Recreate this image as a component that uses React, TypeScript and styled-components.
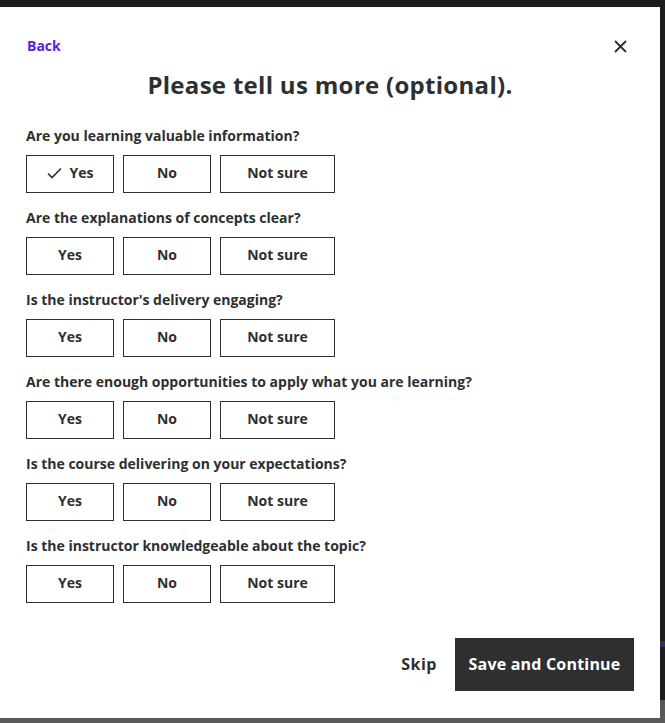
import React, { useState } from "react";
import styled, { createGlobalStyle } from "styled-components";

const Global = createGlobalStyle`
  html, body { margin: 0; padding: 0; }
  body {
    background: #1c1d1f;
    font-family: "Open Sans", "Liberation Sans", Arial, sans-serif;
    color: #2d2f31;
    overflow: hidden;
  }
  * { box-sizing: border-box; }
`;

const Page = styled.div`
  display: flex;
  flex-direction: column;
  width: 665px;
  height: 723px;
`;

const TopBar = styled.div`
  height: 7px;
  background: #1c1d1f;
  flex: none;
`;

const Middle = styled.div`
  display: flex;
  height: 711px;
  flex: none;
`;

const SideStrip = styled.div`
  flex: 1;
  background: linear-gradient(
    to bottom,
    #1c1d1f 0,
    #1c1d1f 634px,
    #3b2a5c 634px,
    #3b2a5c 640px,
    #1c1d1f 640px,
    #1c1d1f 693px,
    #58595b 693px
  );
`;

const BottomBar = styled.div`
  flex: 1;
  background: #58595b;
`;

const Modal = styled.div`
  width: 660px;
  height: 711px;
  background: #ffffff;
  padding: 26px 26px 0 26px;
  display: flex;
  flex-direction: column;
`;

const Header = styled.div`
  display: flex;
  align-items: center;
  justify-content: space-between;
  height: 24px;
`;

const BackLink = styled.a`
  color: #5624d0;
  font-weight: 700;
  font-size: 14px;
  text-decoration: none;
  padding-left: 1px;
  cursor: pointer;
`;

const CloseButton = styled.button`
  border: none;
  background: none;
  padding: 0;
  width: 24px;
  height: 24px;
  margin-right: 2px;
  margin-top: 2px;
  display: flex;
  align-items: center;
  justify-content: center;
  color: #2d2f31;
  cursor: pointer;
`;

const Title = styled.h2`
  margin: 12px 0 0 0;
  font-size: 24px;
  line-height: 32px;
  font-weight: 700;
  letter-spacing: 0.3px;
  text-align: center;
`;

const Questions = styled.div`
  display: flex;
  flex-direction: column;
  gap: 15px;
  margin-top: 25px;
`;

const Question = styled.div`
  display: flex;
  flex-direction: column;
  gap: 9px;
`;

const Label = styled.div`
  font-size: 14px;
  line-height: 20px;
  font-weight: 700;
`;

const Options = styled.div`
  display: flex;
  gap: 9px;
`;

const Option = styled.button<{ $w: number }>`
  width: ${(p) => p.$w}px;
  height: 38px;
  border: 1px solid #2d2f31;
  background: #fff;
  color: #2d2f31;
  font-family: inherit;
  font-size: 14px;
  line-height: 18px;
  font-weight: 700;
  display: flex;
  align-items: center;
  justify-content: center;
  gap: 8px;
  padding: 0 0 2px 0;
  cursor: pointer;
`;

const Footer = styled.div`
  margin-top: 35px;
  display: flex;
  justify-content: flex-end;
  align-items: center;
  gap: 18px;
`;

const SkipButton = styled.button`
  border: none;
  background: none;
  padding: 0 0 2px 0;
  font-family: inherit;
  font-size: 16px;
  font-weight: 700;
  letter-spacing: 0.5px;
  color: #2d2f31;
  cursor: pointer;
`;

const SaveButton = styled.button`
  width: 179px;
  height: 53px;
  border: none;
  background: #2d2f31;
  color: #fff;
  font-family: inherit;
  font-size: 16px;
  font-weight: 700;
  letter-spacing: 0.2px;
  padding: 0 0 2px 0;
  cursor: pointer;
`;

const questions = [
  "Are you learning valuable information?",
  "Are the explanations of concepts clear?",
  "Is the instructor's delivery engaging?",
  "Are there enough opportunities to apply what you are learning?",
  "Is the course delivering on your expectations?",
  "Is the instructor knowledgeable about the topic?",
];

const opts: { label: string; w: number }[] = [
  { label: "Yes", w: 88 },
  { label: "No", w: 88 },
  { label: "Not sure", w: 115 },
];

const Check = () => (
  <svg width="15" height="12" viewBox="0 0 15 12" fill="none">
    <path d="M1 6.5 L5 10.5 L14 1.5" stroke="#2d2f31" strokeWidth="1.6" />
  </svg>
);

const CloseIcon = () => (
  <svg width="13" height="13" viewBox="0 0 13 13" fill="none">
    <path d="M1 1 L12 12 M12 1 L1 12" stroke="#2d2f31" strokeWidth="1.8" />
  </svg>
);

export default function App() {
  const [answers, setAnswers] = useState<Record<number, string>>({ 0: "Yes" });
  return (
    <Page>
      <Global />
      <TopBar />
      <Middle>
        <Modal>
          <Header>
            <BackLink>Back</BackLink>
            <CloseButton aria-label="Close">
              <CloseIcon />
            </CloseButton>
          </Header>
          <Title>Please tell us more (optional).</Title>
          <Questions>
            {questions.map((q, i) => (
              <Question key={q}>
                <Label>{q}</Label>
                <Options>
                  {opts.map((o) => (
                    <Option
                      key={o.label}
                      $w={o.w}
                      onClick={() => setAnswers({ ...answers, [i]: o.label })}
                    >
                      {answers[i] === o.label && <Check />}
                      {o.label}
                    </Option>
                  ))}
                </Options>
              </Question>
            ))}
          </Questions>
          <Footer>
            <SkipButton>Skip</SkipButton>
            <SaveButton>Save and Continue</SaveButton>
          </Footer>
        </Modal>
        <SideStrip />
      </Middle>
      <BottomBar />
    </Page>
  );
}
